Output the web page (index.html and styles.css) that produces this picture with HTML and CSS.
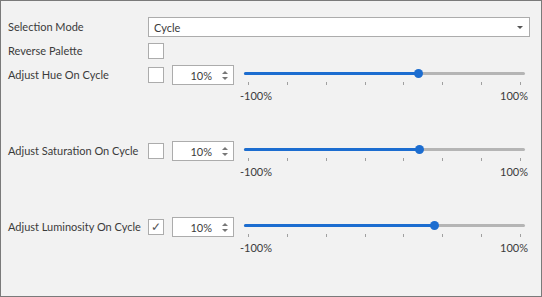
FILE: index.html
```html
<!doctype html>
<html lang="en">
<head>
  <meta charset="utf-8">
  <title>Palette Options</title>
  <link rel="stylesheet" href="styles.css">
</head>
<body>
  <div class="frame">

    <div class="row">
      <span class="label">Selection Mode</span>
      <div class="combo">
        <span>Cycle</span>
        <span class="combo-arrow"></span>
      </div>
    </div>

    <div class="row row-check">
      <span class="label">Reverse Palette</span>
      <span class="check"></span>
    </div>

    <!-- Hue -->
    <div class="adjust">
      <span class="label">Adjust Hue On Cycle</span>
      <span class="check"></span>
      <div class="spin">
        <span class="spin-value">10%</span>
        <span class="spin-buttons"><i class="up"></i><i class="down"></i></span>
      </div>
      <div class="slider">
        <div class="track-wrap">
          <div class="track"></div>
          <div class="fill" style="width: 174px"></div>
          <div class="thumb" style="left: 178px"></div>
        </div>
        <div class="ticks"><i></i><i></i><i></i><i></i><i></i><i></i><i></i><i></i></div>
        <div class="range"><span>-100%</span><span>100%</span></div>
      </div>
    </div>

    <!-- Saturation -->
    <div class="adjust">
      <span class="label">Adjust Saturation On Cycle</span>
      <span class="check"></span>
      <div class="spin">
        <span class="spin-value">10%</span>
        <span class="spin-buttons"><i class="up"></i><i class="down"></i></span>
      </div>
      <div class="slider">
        <div class="track-wrap">
          <div class="track"></div>
          <div class="fill" style="width: 175px"></div>
          <div class="thumb" style="left: 179px"></div>
        </div>
        <div class="ticks"><i></i><i></i><i></i><i></i><i></i><i></i><i></i><i></i></div>
        <div class="range"><span>-100%</span><span>100%</span></div>
      </div>
    </div>

    <!-- Luminosity -->
    <div class="adjust">
      <span class="label">Adjust Luminosity On Cycle</span>
      <span class="check checked">&#10003;</span>
      <div class="spin">
        <span class="spin-value">10%</span>
        <span class="spin-buttons"><i class="up"></i><i class="down"></i></span>
      </div>
      <div class="slider">
        <div class="track-wrap">
          <div class="track"></div>
          <div class="fill" style="width: 190px"></div>
          <div class="thumb" style="left: 194px"></div>
        </div>
        <div class="ticks"><i></i><i></i><i></i><i></i><i></i><i></i><i></i><i></i></div>
        <div class="range"><span>-100%</span><span>100%</span></div>
      </div>
    </div>

  </div>
</body>
</html>
```

FILE: styles.css
```css
* {
  box-sizing: border-box;
}

body {
  margin: 0;
  font-family: Lato, 'Open Sans', sans-serif;
  font-size: 11px;
  color: #3b3b3b;
}

.frame {
  width: 542px;
  height: 297px;
  border: 1px solid #7a7a7a;
  background: #f2f2f2;
  padding: 16px 11px 0 7px;
}

.row {
  display: flex;
  align-items: center;
}

.row-check {
  margin-top: 6px;
}

.label {
  width: 140px;
  flex-shrink: 0;
  line-height: 16px;
  white-space: nowrap;
}

.combo {
  flex: 1;
  height: 20px;
  background: white;
  border: 1px solid #acacac;
  display: flex;
  align-items: center;
  justify-content: space-between;
  padding: 0 6px 0 5px;
}

.combo-arrow {
  width: 0;
  height: 0;
  border-left: 3px solid transparent;
  border-right: 3px solid transparent;
  border-top: 3px solid #555;
}

.check {
  width: 16px;
  height: 16px;
  background: white;
  border: 1px solid #acacac;
  display: flex;
  align-items: center;
  justify-content: center;
  font-size: 12px;
  line-height: 1;
  color: #555;
  flex-shrink: 0;
}

.adjust {
  display: flex;
  align-items: flex-start;
  height: 70px;
  margin-top: 6px;
}

.adjust .label,
.adjust .check {
  margin-top: 2px;
}

.spin {
  width: 62px;
  height: 20px;
  margin-left: 8px;
  background: white;
  border: 1px solid #acacac;
  display: flex;
  align-items: center;
  justify-content: flex-end;
  padding-right: 5px;
}

.spin-value {
  margin-right: 10px;
}

.spin-buttons {
  display: flex;
  flex-direction: column;
  gap: 3px;
}

.spin-buttons i {
  width: 0;
  height: 0;
  border-left: 3px solid transparent;
  border-right: 3px solid transparent;
}

.spin-buttons .up {
  border-bottom: 3px solid #777;
}

.spin-buttons .down {
  border-top: 3px solid #777;
}

.slider {
  width: 290px;
  margin-left: 6px;
}

.track-wrap {
  position: relative;
  height: 16px;
}

.track,
.fill {
  position: absolute;
  top: 7px;
  left: 4px;
  height: 3px;
  border-radius: 2px;
}

.track {
  right: 5px;
  background: #b5b5b5;
}

.fill {
  background: #1c6dd0;
}

.thumb {
  position: absolute;
  top: 4px;
  width: 9px;
  height: 9px;
  margin-left: -4.5px;
  border-radius: 50%;
  background: #1c6dd0;
}

.ticks {
  display: flex;
  justify-content: space-between;
  height: 3px;
  margin-top: 1px;
  padding: 0 9px 0 8px;
}

.ticks i {
  width: 1px;
  background: #a0a0a0;
}

.range {
  display: flex;
  justify-content: space-between;
  margin-top: 3px;
  padding-right: 2px;
  line-height: 15px;
}
```
